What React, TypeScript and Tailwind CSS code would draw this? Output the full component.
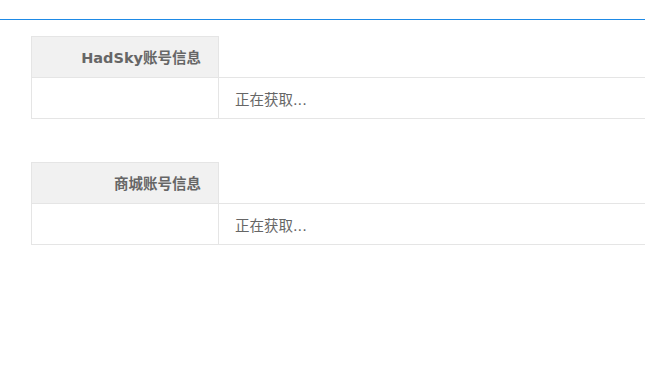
const font = {
  fontFamily: '"Microsoft YaHei", "DejaVu Sans", "Noto Sans CJK SC", sans-serif',
};

function InfoTable({ title }: { title: string }) {
  return (
    <div className="ml-[31px] grid grid-cols-[188px_1fr] text-[14.5px] text-[#666]">
      <div className="h-[42px] border border-[#e5e5e5] bg-[#f1f1f1] pt-1 pr-[17px] flex items-center justify-end font-bold">
        {title}
      </div>
      <div className="h-[42px] border-b border-[#e5e5e5]" />
      <div className="h-[41px] border-x border-b border-[#e5e5e5]" />
      <div className="h-[41px] border-b border-[#e5e5e5] pt-[5px] pl-[16px] flex items-center">
        正在获取...
      </div>
    </div>
  );
}

export default function App() {
  return (
    <div className="w-[645px] h-[374px] overflow-hidden bg-white" style={font}>
      <div className="h-[20px] border-b border-[#1e8ae6]" />
      <div className="pt-4 flex flex-col gap-[43px]">
        <InfoTable title="HadSky账号信息" />
        <InfoTable title="商城账号信息" />
      </div>
    </div>
  );
}
